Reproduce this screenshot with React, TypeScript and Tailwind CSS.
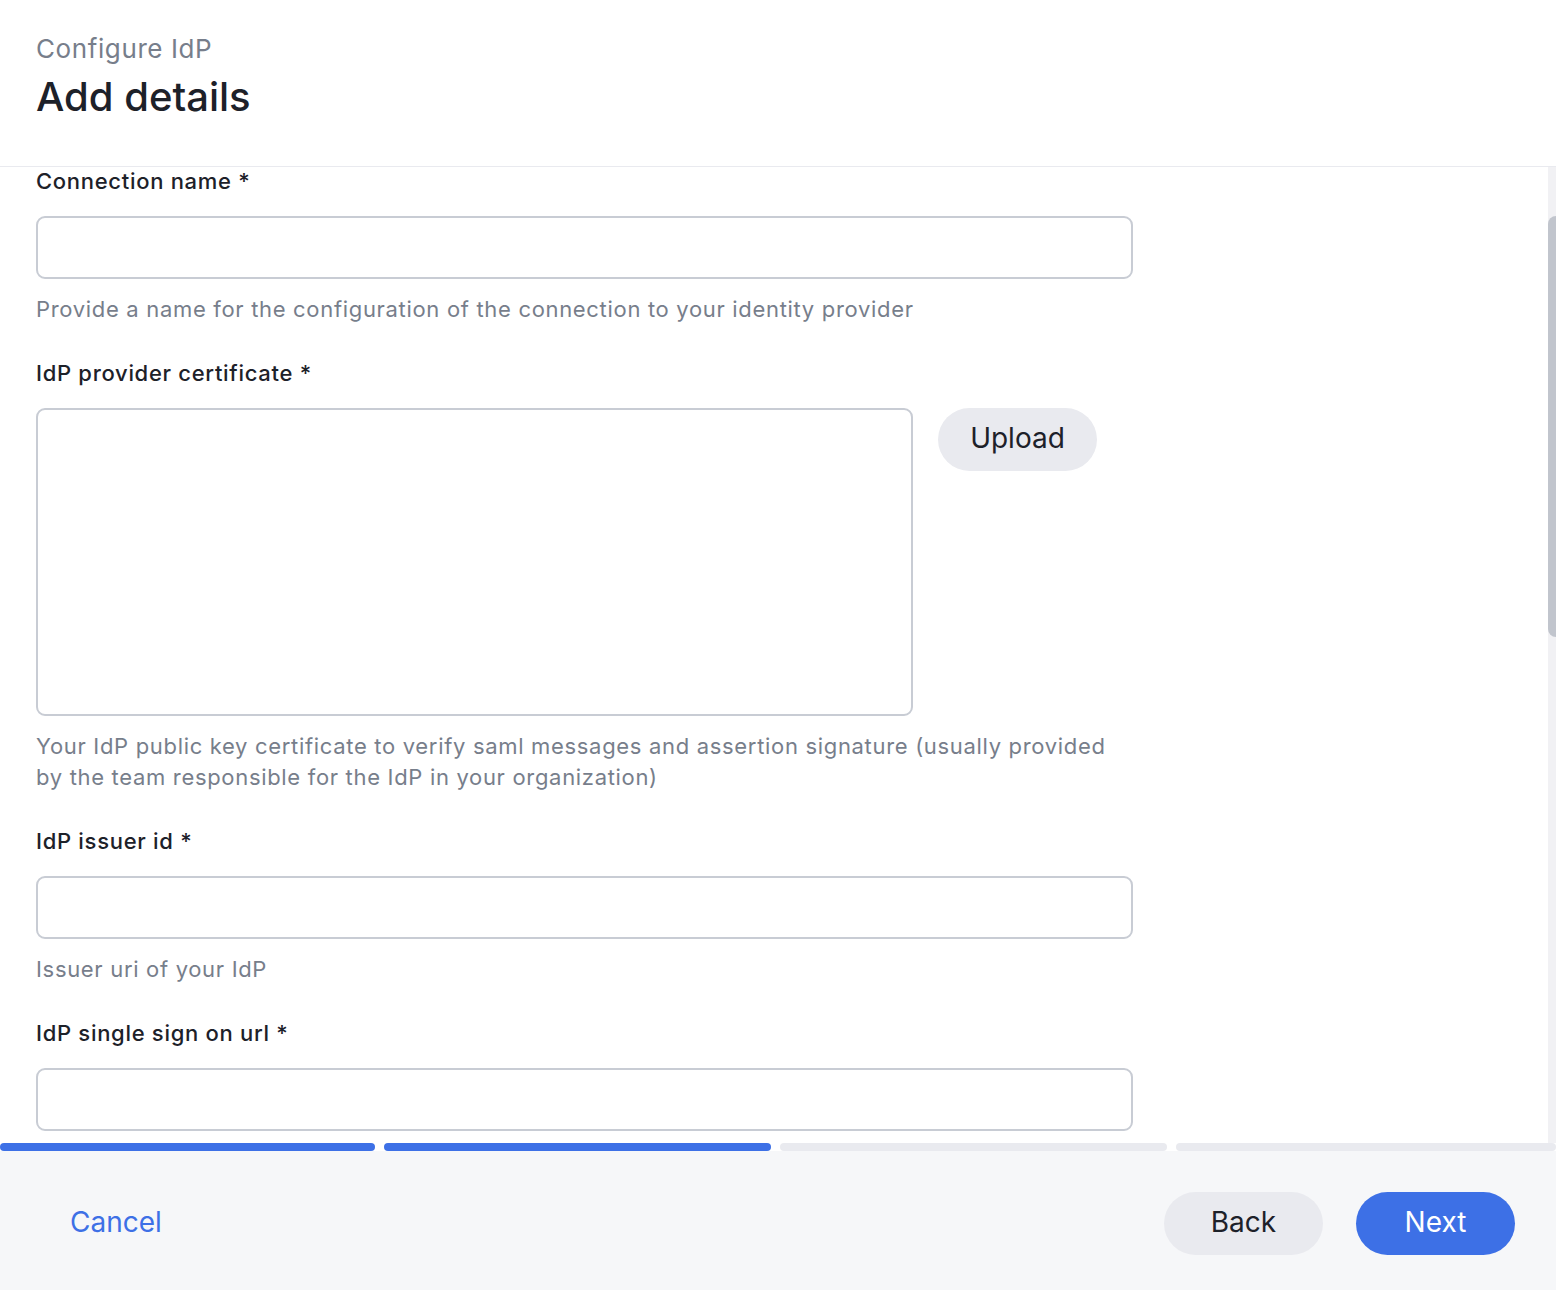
import { type ReactElement } from "react";

const font = { fontFamily: "Inter, 'Noto Sans', sans-serif" };

interface FieldProps {
  label: string;
  help?: string[];
  children: ReactElement;
}

const Field = ({ label, help, children }: FieldProps): ReactElement => (
  <div className="mb-[33px]">
    <div className="text-[22px] leading-[30px] font-medium tracking-[0.7px] text-[#1d2129] mb-[20px]">
      {label}
    </div>
    {children}
    {help && (
      <div className="mt-[15px] text-[22px] leading-[31px] tracking-[0.68px] text-[#777e8b]">
        {help.map((line) => (
          <div key={line}>{line}</div>
        ))}
      </div>
    )}
  </div>
);

const TextInput = (): ReactElement => (
  <div className="w-[1097px] h-[63px] rounded-[9px] border-2 border-[#c8ccd4] bg-white" />
);

export default function App(): ReactElement {
  const steps = [
    { done: true, w: "w-[375px]" },
    { done: true, w: "w-[387px]" },
    { done: false, w: "w-[387px]" },
    { done: false, w: "flex-1" },
  ];

  return (
    <div className="w-[1556px] h-[1290px] flex flex-col bg-white overflow-hidden" style={font}>
      {/* Header */}
      <div className="h-[167px] shrink-0 border-b border-[#e9eaef] px-[36px] pt-[32px]">
        <div className="text-[26px] leading-[34px] tracking-[0.6px] text-[#777e8b]">Configure IdP</div>
        <div className="mt-[7px] text-[40px] leading-[48px] font-medium text-[#1d2129]">
          Add details
        </div>
      </div>

      {/* Scrollable body */}
      <div className="flex flex-1 min-h-0">
        <div className="flex-1 overflow-hidden pl-[36px] -mt-[1px]">
          <Field
            label="Connection name *"
            help={["Provide a name for the configuration of the connection to your identity provider"]}
          >
            <TextInput />
          </Field>

          <Field
            label="IdP provider certificate *"
            help={[
              "Your IdP public key certificate to verify saml messages and assertion signature (usually provided",
              "by the team responsible for the IdP in your organization)",
            ]}
          >
            <div className="flex items-start gap-[25px]">
              <div className="w-[877px] h-[308px] rounded-[9px] border-2 border-[#c8ccd4] bg-white" />
              <button className="w-[159px] h-[63px] pb-[3px] rounded-full bg-[#e9eaef] text-[28px] text-[#1d2129]">
                Upload
              </button>
            </div>
          </Field>

          <Field label="IdP issuer id *" help={["Issuer uri of your IdP"]}>
            <TextInput />
          </Field>

          <Field label="IdP single sign on url *">
            <TextInput />
          </Field>
        </div>

        {/* Scrollbar */}
        <div className="w-[8px] shrink-0 bg-[#f1f1f4] pt-[49px]">
          <div className="h-[421px] w-full rounded-l-full rounded-r-sm bg-[#c1c5cd]" />
        </div>
      </div>

      {/* Progress */}
      <div className="h-[8px] shrink-0 flex gap-[9px] bg-white">
        {steps.map((s, i) => (
          <div
            key={i}
            className={`${s.w} rounded-full ${s.done ? "bg-[#3d70e6]" : "bg-[#e9eaef]"}`}
          />
        ))}
      </div>

      {/* Footer */}
      <div className="h-[139px] shrink-0 bg-[#f6f7f9] flex items-start pt-[41px] pl-[70px] pr-[41px]">
        <button className="h-[63px] pb-[3px] text-[28px] text-[#3d70e6]">Cancel</button>
        <div className="ml-auto flex gap-[33px]">
          <button className="w-[159px] h-[63px] pb-[3px] rounded-full bg-[#e9eaef] text-[28px] text-[#1d2129]">
            Back
          </button>
          <button className="w-[159px] h-[63px] pb-[3px] rounded-full bg-[#3d70e6] text-[28px] text-white">
            Next
          </button>
        </div>
      </div>
    </div>
  );
}
